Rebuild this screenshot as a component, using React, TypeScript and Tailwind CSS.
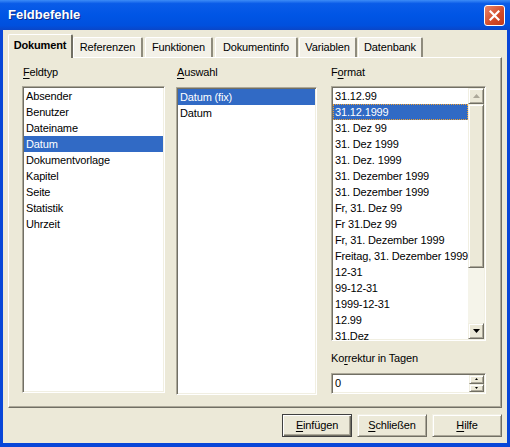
import React from 'react';

const feldtypen = ['Absender', 'Benutzer', 'Dateiname', 'Datum', 'Dokumentvorlage', 'Kapitel', 'Seite', 'Statistik', 'Uhrzeit'];
const auswahl = ['Datum (fix)', 'Datum'];
const formate = [
  '31.12.99',
  '31.12.1999',
  '31. Dez 99',
  '31. Dez 1999',
  '31. Dez. 1999',
  '31. Dezember 1999',
  '31. Dezember 1999',
  'Fr, 31. Dez 99',
  'Fr 31.Dez 99',
  'Fr, 31. Dezember 1999',
  'Freitag, 31. Dezember 1999',
  '12-31',
  '99-12-31',
  '1999-12-31',
  '12.99',
  '31.Dez',
];

const tabs = [
  { label: 'Dokument', cls: 'w-[65px]' },
  { label: 'Referenzen', cls: 'w-[70px]' },
  { label: 'Funktionen', cls: 'w-[68px] ml-[2px]' },
  { label: 'Dokumentinfo', cls: 'w-[83px] ml-[2px]' },
  { label: 'Variablen', cls: 'w-[58px] ml-[1px]' },
  { label: 'Datenbank', cls: 'w-[65px] ml-[1px]' },
];

// sunken box border, classic look
const sunken =
  'border border-t-[#aca899] border-l-[#aca899] border-r-white border-b-white shadow-[inset_1px_1px_0_#716f64,inset_-1px_-1px_0_#f1efe2]';

const raised =
  'bg-[#ece9d8] border border-t-[#f1efe2] border-l-[#f1efe2] border-r-[#716f64] border-b-[#716f64] shadow-[inset_1px_1px_0_#fff,inset_-1px_-1px_0_#aca899]';

function Mnemonic({ text, index }: { text: string; index: number }) {
  return (
    <>
      {text.slice(0, index)}
      <span className="underline underline-offset-[2px]">{text[index]}</span>
      {text.slice(index + 1)}
    </>
  );
}

function ListBox({ items, selected, className }: { items: string[]; selected: number; className: string }) {
  return (
    <div className={`bg-white overflow-hidden ${sunken} ${className}`}>
      <div className="pt-px px-px">
        {items.map((item, i) => (
          <div
            key={i}
            className={`h-[16px] leading-[16px] pl-[2px] whitespace-nowrap ${
              i === selected ? 'bg-[#316ac5] text-white' : 'text-black'
            }`}
          >
            {item}
          </div>
        ))}
      </div>
    </div>
  );
}

function Arrow({ dir, color }: { dir: 'up' | 'down'; color: string }) {
  return (
    <svg width="7" height="4" viewBox="0 0 7 4">
      {dir === 'up' ? (
        <polygon points="3.5,0 7,4 0,4" fill={color} />
      ) : (
        <polygon points="0,0 7,0 3.5,4" fill={color} />
      )}
    </svg>
  );
}

function FormatList() {
  return (
    <div className={`flex bg-white overflow-hidden h-[255px] ${sunken}`}>
      <div className="flex-1 pt-px pl-px overflow-hidden">
        {formate.map((item, i) => (
          <div
            key={i}
            className={`h-[16px] leading-[14px] pl-[1px] whitespace-nowrap border border-dotted ${
              i === 1 ? 'bg-[#316ac5] text-white border-[#f0a030]' : 'text-black border-transparent'
            }`}
          >
            {item}
          </div>
        ))}
      </div>
      <div className="w-[16px] flex flex-col bg-[#f5f4ea] mt-px mr-px mb-px">
        <div className={`h-[16px] flex items-center justify-center ${raised}`}>
          <Arrow dir="up" color="#aca899" />
        </div>
        <div className={`h-[164px] ${raised}`} />
        <div className="flex-1" />
        <div className={`h-[16px] flex items-center justify-center ${raised}`}>
          <Arrow dir="down" color="#000" />
        </div>
      </div>
    </div>
  );
}

function Button({ children, primary }: { children: React.ReactNode; primary?: boolean }) {
  return (
    <div
      className={`h-[23px] w-[70px] flex items-center justify-center text-black ${
        primary
          ? 'bg-[#ece9d8] border border-[#404040] shadow-[inset_1px_1px_0_#fff,inset_-1px_-1px_0_#716f64,inset_-2px_-2px_0_#aca899]'
          : raised
      }`}
    >
      {children}
    </div>
  );
}

export default function App() {
  return (
    <div className="w-[510px] h-[447px] flex flex-col bg-[#0846d8] font-['Liberation_Sans',Arial,sans-serif] text-[11px] tracking-[-0.15px] select-none">
      {/* Title bar */}
      <div className="h-[30px] flex items-center justify-between pl-[8px] pr-[5px] bg-[linear-gradient(to_bottom,#3d8cf7_0%,#0a5ce8_12%,#0055e5_50%,#0050de_85%,#0a46c8_100%)]">
        <span className="text-white font-bold text-[13px] tracking-normal [text-shadow:1px_1px_0_#0a2a8a]">Feldbefehle</span>
        <div className="w-[21px] h-[21px] rounded-[3px] border border-white bg-[linear-gradient(135deg,#e8856a,#d24a28_60%,#c13a1c)] flex items-center justify-center">
          <svg width="11" height="11" viewBox="0 0 11 11">
            <path d="M1.5 1.5 L9.5 9.5 M9.5 1.5 L1.5 9.5" stroke="#fff" strokeWidth="2.2" strokeLinecap="square" />
          </svg>
        </div>
      </div>

      {/* Client area */}
      <div className="flex-1 mx-[3px] mb-[4px] bg-[#ece9d8] flex flex-col px-[5px] pt-[3px]">
        {/* Tabs */}
        <div className="flex items-end h-[24px] relative z-10">
          {tabs.map((t, i) =>
            i === 0 ? (
              <div
                key={t.label}
                className={`${t.cls} h-[24px] -mb-px bg-[#ece9d8] border-t border-l border-white border-r-2 border-r-[#716f64] rounded-t-[2px] flex items-center justify-center font-bold text-black pb-[2px]`}
              >
                {t.label}
              </div>
            ) : (
              <div
                key={t.label}
                className={`${t.cls} h-[20px] bg-[#f3f1e8] border-t border-l border-white border-r-2 border-r-[#8e8b7d] rounded-t-[2px] flex items-center justify-center text-black`}
              >
                {t.label}
              </div>
            )
          )}
        </div>

        {/* Panel */}
        <div className="h-[351px] border border-t-white border-l-white border-r-[#716f64] border-b-[#716f64] shadow-[inset_-1px_-1px_0_#aca899] flex pl-[13px] pr-[15px] pt-[8px] text-black">
          <div className="w-[143px] flex flex-col">
            <div className="h-[13px] leading-[13px] pl-px mb-[7px]">
              <Mnemonic text="Feldtyp" index={0} />
            </div>
            <ListBox items={feldtypen} selected={3} className="h-[307px]" />
          </div>

          <div className="w-[141px] ml-[11px] flex flex-col">
            <div className="h-[13px] leading-[13px] pl-px mb-[8px]">
              <Mnemonic text="Auswahl" index={0} />
            </div>
            <ListBox items={auswahl} selected={0} className="h-[308px]" />
          </div>

          <div className="w-[155px] ml-[14px] flex flex-col">
            <div className="h-[13px] leading-[13px] mb-[7px]">
              <Mnemonic text="Format" index={1} />
            </div>
            <FormatList />
            <div className="h-[13px] leading-[13px] mt-[11px] mb-[8px]">
              <Mnemonic text="Korrektur in Tagen" index={2} />
            </div>
            <div className={`h-[21px] flex bg-white ${sunken}`}>
              <div className="flex-1 leading-[19px] pl-[3px]">0</div>
              <div className="w-[15px] flex flex-col my-px mr-px">
                <div className={`flex-1 flex items-center justify-center ${raised}`}>
                  <svg width="3" height="2" viewBox="0 0 3 2">
                    <polygon points="1.5,0 3,2 0,2" fill="#000" />
                  </svg>
                </div>
                <div className={`flex-1 flex items-center justify-center ${raised}`}>
                  <svg width="3" height="2" viewBox="0 0 3 2">
                    <polygon points="0,0 3,0 1.5,2" fill="#000" />
                  </svg>
                </div>
              </div>
            </div>
          </div>
        </div>

        {/* Buttons */}
        <div className="flex justify-end gap-[5px] mt-[6px]">
          <Button primary>
            <Mnemonic text="Einfügen" index={0} />
          </Button>
          <Button>
            <Mnemonic text="Schließen" index={0} />
          </Button>
          <Button>
            <Mnemonic text="Hilfe" index={0} />
          </Button>
        </div>
      </div>
    </div>
  );
}
